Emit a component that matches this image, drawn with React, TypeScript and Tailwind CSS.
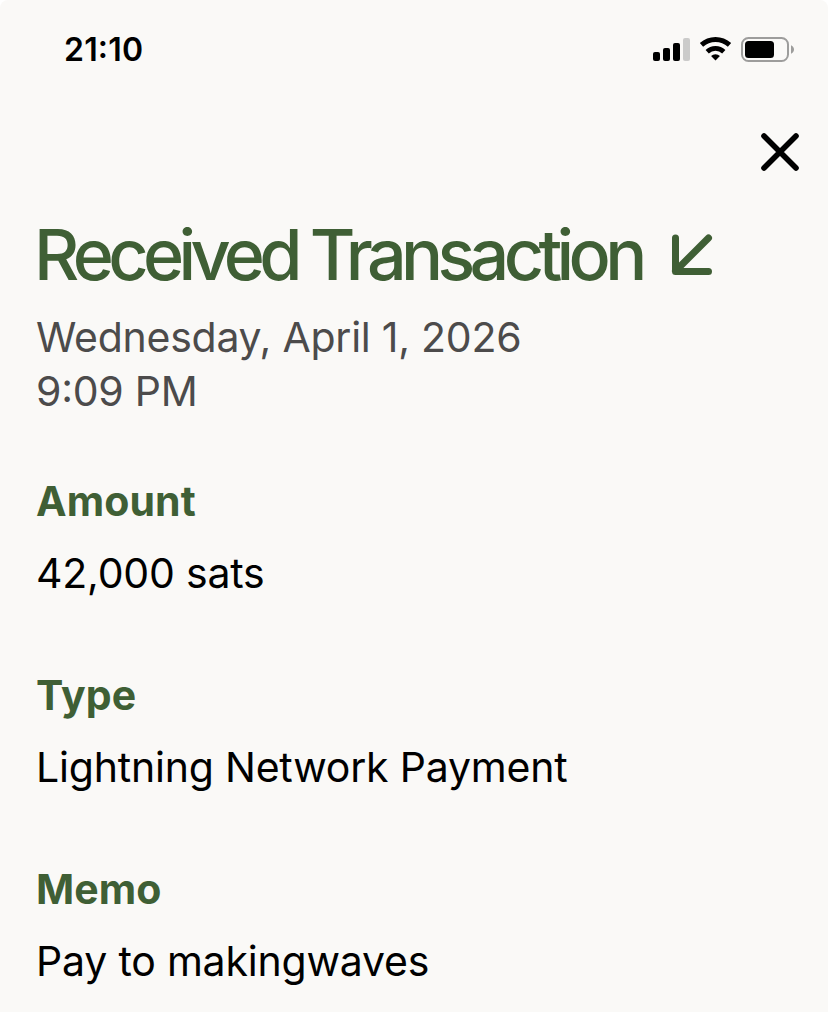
import React from 'react';

const details = [
  { label: 'Amount', value: '42,000 sats' },
  { label: 'Type', value: 'Lightning Network Payment' },
  { label: 'Memo', value: 'Pay to makingwaves' },
];

const StatusBar: React.FC = () => {
  return (
    <div className="flex h-[100px] items-center justify-between pr-[34px] pl-16">
      <span className="text-[32px] leading-none font-semibold tracking-[0.2px] [font-feature-settings:'case']">21:10</span>
      <div className="flex items-center gap-[10px]">
        <svg width="37" height="24" viewBox="0 0 37 24">
          <rect x="0" y="14" width="7" height="9" rx="2" />
          <rect x="10" y="10" width="7" height="13" rx="2" />
          <rect x="20" y="5" width="7" height="18" rx="2" />
          <rect x="30" y="0" width="7" height="23" rx="2" fill="#cbcbca" />
        </svg>
        <svg width="31" height="24" viewBox="0 0 31.4 24" className="relative -top-px overflow-visible" fill="none" stroke="#000">
          <path d="M1.5 7.9a21.2 21.2 0 0 1 28.4 0" strokeWidth="5" />
          <path d="M7.3 14.7a12.3 12.3 0 0 1 16.8 0" strokeWidth="4.8" />
          <path d="M15.7 23.7 11.2 19.2a6.4 6.4 0 0 1 9 0z" fill="#000" stroke="none" />
        </svg>
        <svg width="53" height="25" viewBox="0 0 53 25" className="relative -top-px">
          <rect x="1" y="1" width="46" height="23" rx="6.5" fill="none" stroke="#9d9d9c" strokeWidth="2" />
          <rect x="4" y="4" width="29" height="17" rx="3.5" />
          <path d="M50 8.3c1.9.8 3 2.4 3 4.2s-1.1 3.4-3 4.2z" fill="#9d9d9c" />
        </svg>
      </div>
    </div>
  );
};

const App: React.FC = () => {
  return (
    <div className="bg-white">
      <div className="h-[1012px] w-[828px] overflow-hidden rounded-t-lg bg-[#faf9f7] font-['Inter',sans-serif] text-black">
        <StatusBar />
        <div className="flex justify-end pt-[33px] pr-[29px]">
          <button type="button" aria-label="Close">
            <svg width="38" height="38" viewBox="0 0 38 38" stroke="#000" strokeWidth="5.6" strokeLinecap="round">
              <path d="M3 3l32 32M35 3L3 35" />
            </svg>
          </button>
        </div>
        <div className="px-9 pt-[49px]">
          <div className="-ml-0.5 flex h-[70px] items-start">
            <h1 className="text-[70px] leading-[70px] font-medium tracking-[-5.65px] whitespace-nowrap text-[#3f5f35]">
              Received Transaction
            </h1>
            <svg
              width="42"
              height="42"
              viewBox="0 0 42 42"
              className="mt-[14px] ml-[29px]"
              fill="none"
              stroke="#3f5f35"
              strokeWidth="7"
              strokeLinecap="round"
              strokeLinejoin="round"
            >
              <path d="M4.5 4v33.500h33M37.500 4l-33 33" />
            </svg>
          </div>
          <p className="mt-5 text-[41px] leading-[54px] tracking-[-0.25px] text-[#4c4b4b] [font-feature-settings:'case']">
            Wednesday, April 1, 2026
            <br />
            9:09 PM
          </p>
          <div className="mt-14 flex flex-col gap-[68px]">
            {details.map((d) => (
              <div key={d.label} className="flex flex-col gap-[18px] text-[41px] leading-[54px]">
                <h2 className="font-bold tracking-[0.1px] text-[#3f5f35]">{d.label}</h2>
                <p className="tracking-[-0.2px]">{d.value}</p>
              </div>
            ))}
          </div>
        </div>
      </div>
    </div>
  );
};

export default App;
